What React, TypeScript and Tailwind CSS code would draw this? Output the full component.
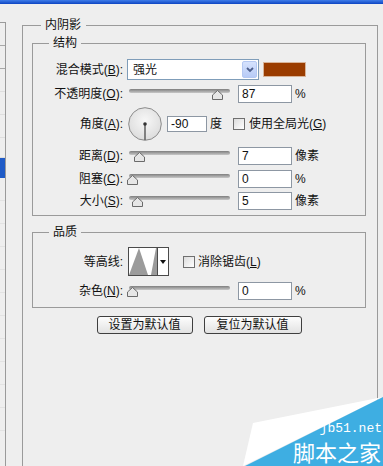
import React from "react";

const line = "border-[#9a9a9a]";

function Label({ children, w = "w-[90px]" }: { children: React.ReactNode; w?: string }) {
  return <span className={`${w} shrink-0 text-right leading-[14px]`}>{children}</span>;
}

function Key({ k }: { k: string }) {
  return (
    <>
      (<u className="underline-offset-[1px]">{k}</u>):
    </>
  );
}

function Slider({ value }: { value: number }) {
  return (
    <div className="relative ml-[6px] h-[18px] w-[101px] shrink-0">
      <div className="absolute left-0 right-0 top-[4px] h-[4px] rounded-full bg-[linear-gradient(to_bottom,#7e7e7e,#c8c8c8)]" />
      <svg
        width="11"
        height="10"
        viewBox="0 0 11 10"
        className="absolute top-[5px]"
        style={{ left: Math.round(value * 0.98 - 2) }}
      >
        <polygon points="5.5,0.5 10.5,5 10.5,9.5 0.5,9.5 0.5,5" fill="#e6e6e6" stroke="#6a6a6a" />
      </svg>
    </div>
  );
}

function NumBox({ value, w = "w-[54px]", ml = "ml-[8px]" }: { value: string; w?: string; ml?: string }) {
  return (
    <div className={`${ml} ${w} flex h-[18px] shrink-0 items-center border border-[#8d97a3] bg-white pl-[3px] leading-none`}>
      {value}
    </div>
  );
}

function Check() {
  return <div className="h-[12px] w-[12px] shrink-0 border border-[#6f6f6f] bg-[linear-gradient(135deg,#dcdcdc,#ffffff)]" />;
}

function SliderRow({ label, value, unit, mt }: { label: React.ReactNode; value: number; unit: string; mt: string }) {
  return (
    <div className={`${mt} flex h-[18px] items-center`}>
      <Label>{label}</Label>
      <Slider value={value} />
      <NumBox value={String(value)} />
      <span className="ml-[3px] leading-[14px]">{unit}</span>
    </div>
  );
}

function LeftList() {
  const rows = [23, 23, 23, 23, 23, 20];
  return (
    <div className="mt-[18px] h-[444px] w-[6px] shrink-0 border-r border-t border-[#9a9a9a]">
      {rows.map((h, i) => (
        <div key={i} style={{ height: h }} className={i < 2 ? "border-b border-[#a8a8a8]" : "border-b border-[#dedede]"} />
      ))}
      <div className="h-[20px] bg-[#1f5bc7]" />
      {[23, 23, 23, 23, 23, 23, 23, 23, 23, 23, 23].map((h, i) => (
        <div key={i} style={{ height: h }} className="border-b border-[#e2e2e2]" />
      ))}
    </div>
  );
}

export default function App() {
  return (
    <div className="relative h-[466px] w-[383px] overflow-hidden bg-[#eeeeee] font-['Liberation_Sans','Noto_Sans_CJK_SC',sans-serif] text-[12px] text-[#111]">
      <div className="h-[4px] bg-[linear-gradient(to_bottom,#3f7de9,#0c44c2)]" />
      <div className="flex">
        <LeftList />
        <fieldset className={`ml-[16px] mt-[14px] h-[480px] w-[356px] shrink-0 border ${line} pl-[9px] pr-[11px] pt-[4px]`}>
          <legend className="ml-[9px] pl-[4px] pr-[5px] leading-[14px]">内阴影</legend>

          <fieldset className={`w-[334px] border ${line} pb-[5px] pt-[9px]`}>
            <legend className="ml-[16px] px-[4px] leading-[14px]">结构</legend>

            <div className="flex h-[21px] items-center">
              <Label>
                混合模式<Key k="B" />
              </Label>
              <div className="ml-[4px] flex h-[21px] w-[132px] items-center justify-between border border-[#7f9db9] bg-white pl-[5px] pr-[1px]">
                <span className="leading-[14px]">强光</span>
                <div className="flex h-[17px] w-[15px] items-center justify-center rounded-[2px] border border-[#b4c8f2] bg-[linear-gradient(to_bottom,#d6e2fd,#b7cbf6)]">
                  <svg width="8" height="6" viewBox="0 0 8 6">
                    <polyline points="1,1 4,4 7,1" fill="none" stroke="#4d5f8c" strokeWidth="1.8" />
                  </svg>
                </div>
              </div>
              <div className="ml-[4px] h-[15px] w-[43px] border border-[#d8b49a] bg-[#9a3c00]" />
            </div>

            <SliderRow label={<>不透明度<Key k="O" /></>} value={87} unit="%" mt="mt-[5px]" />

            <div className="mt-[4px] flex h-[34px] items-center">
              <Label>
                角度<Key k="A" />
              </Label>
              <svg width="34" height="34" viewBox="0 0 34 34" className="ml-[5px] shrink-0">
                <defs>
                  <radialGradient id="dial" cx="50%" cy="40%" r="60%">
                    <stop offset="0%" stopColor="#f7f7f7" />
                    <stop offset="100%" stopColor="#dcdcdc" />
                  </radialGradient>
                </defs>
                <circle cx="17" cy="17" r="16.3" fill="url(#dial)" stroke="#8a8a8a" />
                <line x1="17" y1="17" x2="17" y2="33" stroke="#555" strokeWidth="1.4" />
                <circle cx="17" cy="17" r="1.8" fill="#333" />
              </svg>
              <div className="ml-[5px] flex h-[16px] w-[40px] shrink-0 items-center border border-[#8d97a3] bg-white pl-[3px] leading-none">
                -90
              </div>
              <span className="ml-[3px] leading-[14px]">度</span>
              <div className="ml-[11px]">
                <Check />
              </div>
              <span className="ml-[4px] leading-[14px]">
                使用全局光(<u>G</u>)
              </span>
            </div>

            <SliderRow label={<>距离<Key k="D" /></>} value={7} unit="像素" mt="mt-[6px]" />
            <SliderRow label={<>阻塞<Key k="C" /></>} value={0} unit="%" mt="mt-[5px]" />
            <SliderRow label={<>大小<Key k="S" /></>} value={5} unit="像素" mt="mt-[4px]" />
          </fieldset>

          <fieldset className={`mt-[9px] w-[334px] border ${line} pb-[7px] pt-[8px]`}>
            <legend className="ml-[16px] px-[4px] leading-[14px]">品质</legend>

            <div className="flex h-[29px] items-center">
              <Label>等高线:</Label>
              <div className="ml-[5px] flex h-[29px] w-[41px] shrink-0 border border-[#4a4a4a] bg-white">
                <svg width="28" height="27" viewBox="0 0 28 27" className="shrink-0">
                  <polygon points="0,27 10,0 19,27" fill="#9b9b9b" />
                  <polygon points="22,27 27,0 28,0 28,27" fill="#9b9b9b" />
                </svg>
                <div className="flex flex-1 items-center justify-center border-l border-[#4a4a4a]">
                  <svg width="6" height="4" viewBox="0 0 6 4">
                    <polygon points="0,0 6,0 3,4" fill="#111" />
                  </svg>
                </div>
              </div>
              <div className="ml-[14px]">
                <Check />
              </div>
              <span className="ml-[3px] leading-[14px]">
                消除锯齿(<u>L</u>)
              </span>
            </div>

            <SliderRow label={<>杂色<Key k="N" /></>} value={0} unit="%" mt="mt-[6px]" />
          </fieldset>

          <div className="mt-[8px] flex justify-center gap-[11px]">
            <button className="flex h-[18px] w-[96px] items-center justify-center rounded-[3px] border border-[#3f3f3f] bg-[linear-gradient(to_bottom,#fdfdfd,#e2e2e2)] leading-none">
              设置为默认值
            </button>
            <button className="flex h-[18px] w-[98px] items-center justify-center rounded-[3px] border border-[#3f3f3f] bg-[linear-gradient(to_bottom,#fdfdfd,#e2e2e2)] leading-none">
              复位为默认值
            </button>
          </div>
        </fieldset>
      </div>

      <div className="absolute bottom-0 right-0 h-[70px] w-[140px]">
        <svg width="140" height="70" viewBox="0 0 140 70" className="absolute inset-0">
          <polygon points="10,27 140,1 0,70" fill="#ffffff" />
          <polygon points="140,1 140,70 2,70" fill="#3eaee2" />
        </svg>
        <span className="absolute right-[1px] top-[26px] font-['Liberation_Mono',monospace] text-[13px] leading-[13px] text-white">
          jb51.net
        </span>
        <span className="absolute right-[2px] top-[44px] whitespace-nowrap font-['Noto_Sans_CJK_SC',sans-serif] text-[22px] leading-[22px] text-white">
          脚本之家
        </span>
      </div>
    </div>
  );
}
